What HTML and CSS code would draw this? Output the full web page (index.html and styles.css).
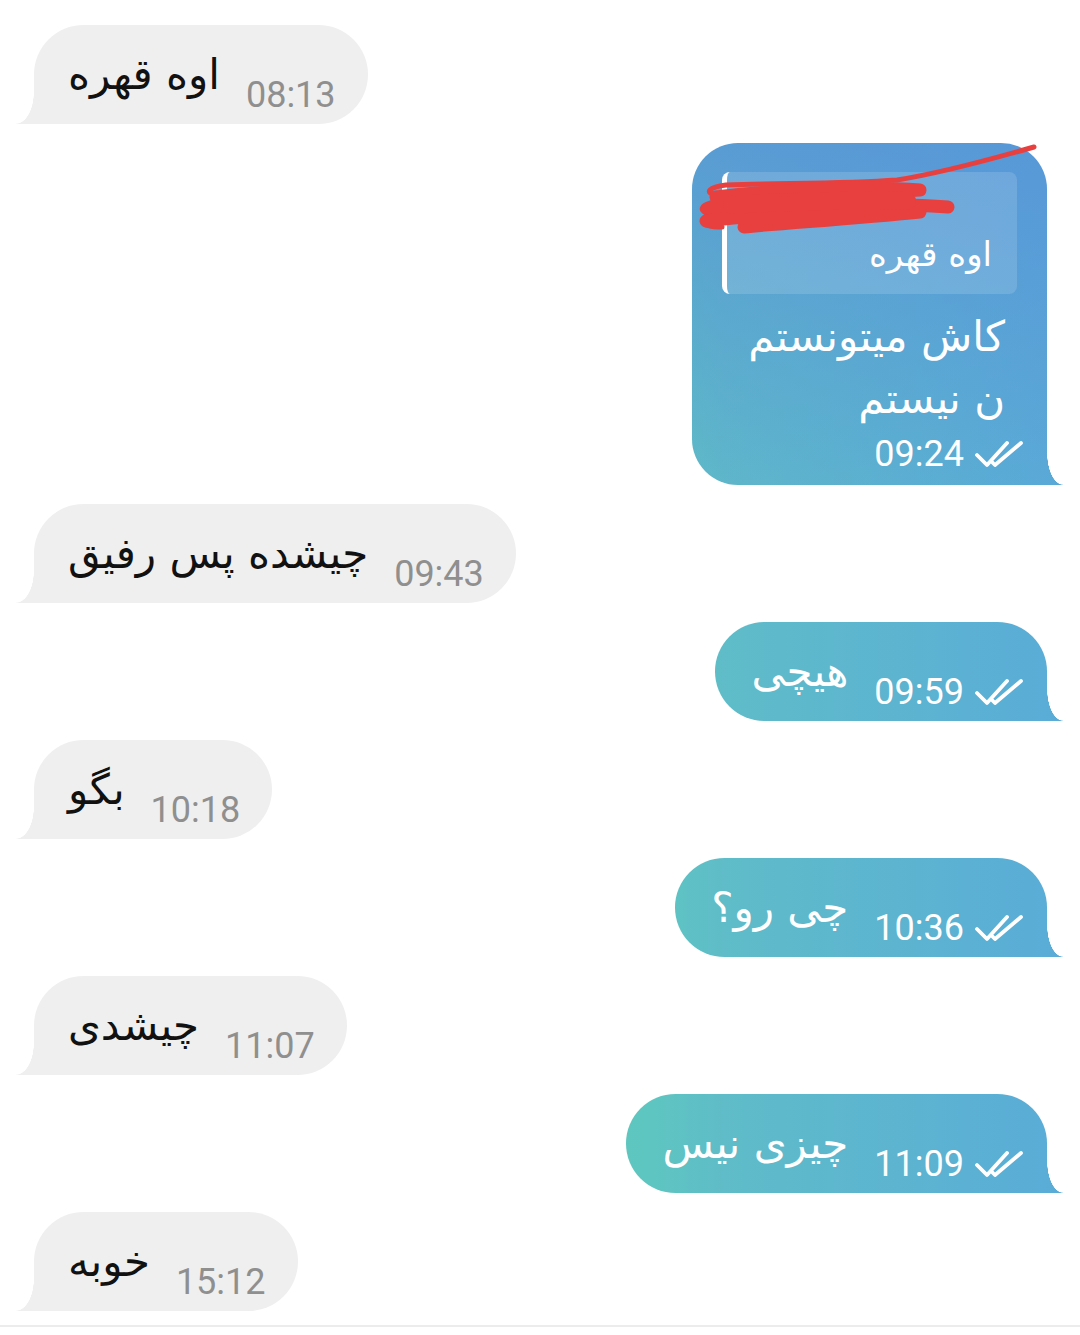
FILE: index.html
```html
<!DOCTYPE html>
<html lang="fa">
<head>
    <meta charset="UTF-8">
    <meta name="viewport" content="width=device-width, initial-scale=1.0">
    <title>Chat</title>
    <link rel="stylesheet" href="styles.css">
</head>
<body>
    <div class="chat">
        <div class="msg in">
            <span class="text" dir="rtl">اوه قهره</span>
            <span class="time">08:13</span>
        </div>

        <div class="msg out reply">
            <div class="quote">
                <div class="quote-name"></div>
                <div class="quote-text" dir="rtl">اوه قهره</div>
            </div>
            <div class="reply-text" dir="rtl">کاش میتونستم<br>ن نیستم</div>
            <div class="reply-meta">
                <span class="time">09:24</span>
                <svg class="check" viewBox="0 0 50 28" width="50" height="28"><path d="M2 15 L12 25 L32 3 M17 22 L20 25 L46 3"/></svg>
            </div>
            <!-- name of the quoted sender is scratched out in red -->
            <svg class="scribble" viewBox="0 0 360 100" width="360" height="100">
                <path class="thin" d="M342 4 C 300 16, 250 30, 205 37 C 150 41, 90 40, 34 42 C 18 44, 10 50, 26 52"/>
                <path class="thin" d="M30 58 C 8 60, 4 68, 20 72 C 8 76, 6 84, 30 84"/>
                <path d="M24 54 C 90 46, 180 43, 228 47 C 160 52, 70 55, 16 66 C 90 62, 200 60, 256 64"/>
                <path d="M14 78 C 80 70, 170 68, 228 69 C 160 76, 90 80, 52 84"/>
                <path class="fat" d="M40 62 C 100 58, 170 57, 215 58"/>
            </svg>
        </div>

        <div class="msg in">
            <span class="text" dir="rtl">چیشده پس رفیق</span>
            <span class="time">09:43</span>
        </div>

        <div class="msg out">
            <span class="text" dir="rtl">هیچی</span>
            <span class="time">09:59</span>
            <svg class="check" viewBox="0 0 50 28" width="50" height="28"><path d="M2 15 L12 25 L32 3 M17 22 L20 25 L46 3"/></svg>
        </div>

        <div class="msg in">
            <span class="text" dir="rtl">بگو</span>
            <span class="time">10:18</span>
        </div>

        <div class="msg out">
            <span class="text" dir="rtl">چی رو؟</span>
            <span class="time">10:36</span>
            <svg class="check" viewBox="0 0 50 28" width="50" height="28"><path d="M2 15 L12 25 L32 3 M17 22 L20 25 L46 3"/></svg>
        </div>

        <div class="msg in">
            <span class="text" dir="rtl">چیشدی</span>
            <span class="time">11:07</span>
        </div>

        <div class="msg out">
            <span class="text" dir="rtl">چیزی نیس</span>
            <span class="time">11:09</span>
            <svg class="check" viewBox="0 0 50 28" width="50" height="28"><path d="M2 15 L12 25 L32 3 M17 22 L20 25 L46 3"/></svg>
        </div>

        <div class="msg in">
            <span class="text" dir="rtl">خوبه</span>
            <span class="time">15:12</span>
        </div>
    </div>
    <div class="composer"></div>
</body>
</html>
```

FILE: styles.css
```css
body {
    margin: 0;
    height: 1335px;
    overflow: hidden;
    background-color: #fff;
    font-family: "DejaVu Sans", sans-serif;
}

.chat {
    display: flex;
    flex-direction: column;
    gap: 19px;
    padding-top: 25px;
}

.msg {
    position: relative;
    display: flex;
    align-items: flex-end;
    border-radius: 50px;
    padding: 23px 32px 11px 34px;
}

.msg .text {
    font-family: "DejaVu Sans", sans-serif;
    font-size: 42px;
    line-height: 54px;
    margin-bottom: 11px;
}

.time {
    font-family: Roboto, sans-serif;
    font-size: 36px;
    line-height: 1;
    margin-left: 26px;
}

.in {
    align-self: flex-start;
    margin-left: 34px;
    background-color: #efefef;
    color: #111;
    border-bottom-left-radius: 0;
}

.in .time {
    color: #8f8f8f;
}

.out {
    align-self: flex-end;
    margin-right: 33px;
    padding-right: 22px;
    padding-left: 36px;
    color: #fff;
    background:
        linear-gradient(to bottom, #5790d8 0px, rgba(87, 144, 216, 0) 560px) fixed,
        linear-gradient(to right, #61d0b8 0%, #5ec6c0 60%, #5fbcc8 67%, #5aaed6 95%, #5aabd7 100%) fixed;
    border-bottom-right-radius: 0;
}

.in::before,
.out::before {
    content: "";
    position: absolute;
    bottom: 0;
    width: 18px;
    height: 32px;
    background: inherit;
}

.in::before {
    left: -18px;
    -webkit-mask: radial-gradient(ellipse 18px 32px at 0 0, transparent 98%, #000 100%);
}

.out::before {
    right: -16px;
    width: 16px;
    -webkit-mask: radial-gradient(ellipse 16px 32px at 100% 0, transparent 98%, #000 100%);
}

.check {
    margin-left: 11px;
    margin-bottom: 4px;
    fill: none;
    stroke: #fff;
    stroke-width: 3.8;
    stroke-linecap: round;
    stroke-linejoin: round;
}

.reply {
    flex-direction: column;
    align-items: stretch;
    width: 355px;
    box-sizing: border-box;
    padding: 29px 22px 13px 30px;
    border-radius: 46px;
    border-bottom-right-radius: 0;
}

.quote {
    width: 295px;
    height: 122px;
    box-sizing: border-box;
    border-left: 5px solid #fff;
    border-radius: 8px;
    background-color: rgba(255, 255, 255, 0.14);
    padding: 0 25px 0 0;
}

.quote-name {
    height: 58px;
}

.quote-text {
    font-size: 34px;
    line-height: 48px;
}

.reply-text {
    font-size: 42px;
    line-height: 62px;
    padding: 12px 20px 0 0;
}

.reply-meta {
    display: flex;
    justify-content: flex-end;
    align-items: flex-end;
    margin-top: 6px;
}

.scribble {
    position: absolute;
    left: 0;
    top: 0;
    fill: none;
    stroke: #e8403f;
    stroke-width: 13;
    stroke-linecap: round;
    stroke-linejoin: round;
}

.scribble .thin {
    stroke-width: 5;
}

.scribble .fat {
    stroke-width: 18;
}

.composer {
    position: absolute;
    left: 0;
    right: 0;
    top: 1325px;
    height: 10px;
    border-top: 2px solid #ececec;
    background-color: #fff;
}
```
